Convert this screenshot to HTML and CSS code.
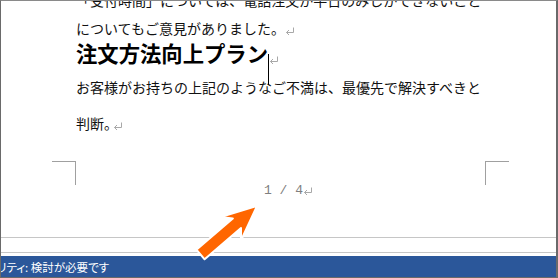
FILE: index.html
```html
<!DOCTYPE html>
<html lang="ja">
<head>
<meta charset="utf-8">
<link rel="stylesheet" href="styles.css">
</head>
<body>
<div class="frame">
  <div class="doc">
    <div class="body">
      <p class="para p1">「受付時間」については、電話注文が平日のみしかできないこと<br>についてもご意見がありました。<svg class="pm" width="10" height="8" viewBox="0 0 10 8"><path d="M8.5 0.5 V5.5 H1.5 M4 3 L1.5 5.5 L4 8" fill="none" stroke="#a8a8a8" stroke-width="1"/></svg></p>
      <h1 class="heading">注文方法向上プラン<span class="cursor"></span><svg class="pm pm-h" width="10" height="8" viewBox="0 0 10 8"><path d="M8.5 0.5 V5.5 H1.5 M4 3 L1.5 5.5 L4 8" fill="none" stroke="#a8a8a8" stroke-width="1"/></svg></h1>
      <p class="para p2">お客様がお持ちの上記のようなご不満は、最優先で解決すべきと<br>判断。<svg class="pm pm-5" width="10" height="8" viewBox="0 0 10 8"><path d="M8.5 0.5 V5.5 H1.5 M4 3 L1.5 5.5 L4 8" fill="none" stroke="#a8a8a8" stroke-width="1"/></svg></p>
    </div>
    <div class="marks"><span class="mark mark-l"></span><span class="mark mark-r"></span></div>
    <div class="pagenum">1 / 4<svg class="pm pm-n" width="10" height="8" viewBox="0 0 10 8"><path d="M8.5 0.5 V5.5 H1.5 M4 3 L1.5 5.5 L4 8" fill="none" stroke="#a8a8a8" stroke-width="1"/></svg></div>
  </div>
  <div class="rules"></div>
  <div class="status"><span class="status-text">リティ: 検討が必要です</span></div>
  <svg class="arrow" width="558" height="278" viewBox="0 0 558 278">
    <polygon points="257,206 241,240.5 241,228 204.6,259.3 196.4,249.7 232.8,218.5 220.6,217" fill="#ff6600" stroke="#ffffff" stroke-width="2" stroke-linejoin="round"/>
  </svg>
</div>
</body>
</html>
```
FILE: styles.css
```css
html, body {
  margin: 0;
  padding: 0;
  background: #ffffff;
}
.frame {
  position: relative;
  width: 558px;
  height: 278px;
  box-sizing: border-box;
  border-top: 1px solid #8a8a8a;
  border-left: 1px solid #6a6a6a;
  border-right: 2px solid #6a6a6a;
  border-bottom: 1px solid #6a6a6a;
  display: flex;
  flex-direction: column;
  overflow: hidden;
  font-family: "Noto Sans CJK JP", "Noto Sans", sans-serif;
}
.doc {
  height: 236px;
  overflow: hidden;
  flex: none;
}
.body {
  margin-top: -15px;
  padding-left: 75px;
  color: #111111;
}
.para {
  margin: 0;
  font-size: 14px;
  white-space: nowrap;
}
.p1 {
  line-height: 28px;
}
.p2 {
  margin-top: 5px;
  line-height: 36px;
}
.heading {
  margin: 1px 0 0;
  font-size: 21.33px;
  font-weight: 700;
  line-height: 20px;
  white-space: nowrap;
  color: #000000;
}
.cursor {
  position: relative;
  display: inline-block;
  width: 0;
  height: 0;
}
.cursor::after {
  content: "";
  position: absolute;
  left: 0;
  top: -8px;
  width: 1px;
  height: 31px;
  background: #000000;
}
.pm {
  display: inline-block;
  margin-left: 0;
  vertical-align: -1px;
}
.pm-h {
  margin-left: 1px;
  vertical-align: -2px;
}
.pm-5 {
  margin-left: -5px;
}
.pm-n {
  margin-left: 0;
  vertical-align: -1px;
}
.marks {
  margin-top: 20px;
  display: flex;
  justify-content: space-between;
  padding-left: 51px;
  padding-right: 47px;
}
.mark {
  display: block;
  width: 24px;
  height: 24px;
  box-sizing: border-box;
  border-top: 1px solid #a0a0a0;
}
.mark-l {
  border-right: 1px solid #a0a0a0;
}
.mark-r {
  border-left: 1px solid #a0a0a0;
}
.pagenum {
  padding-left: 263px;
  font-family: "Liberation Mono", "DejaVu Sans Mono", monospace;
  font-size: 13px;
  line-height: 12px;
  color: #7f7f7f;
  white-space: nowrap;
}
.rules {
  flex: none;
  height: 14px;
  border-top: 1px solid #c6c6c6;
  border-bottom: 1px solid #c6c6c6;
  margin-bottom: 3px;
}
.status {
  flex: none;
  height: 21px;
  background: #2b579a;
  color: #ffffff;
  display: flex;
  align-items: center;
  overflow: hidden;
}
.status-text {
  margin-left: -4px;
  font-size: 11.5px;
  line-height: 14px;
  font-feature-settings: "palt";
  white-space: nowrap;
}
.arrow {
  position: absolute;
  left: -1px;
  top: -1px;
  pointer-events: none;
}
```
